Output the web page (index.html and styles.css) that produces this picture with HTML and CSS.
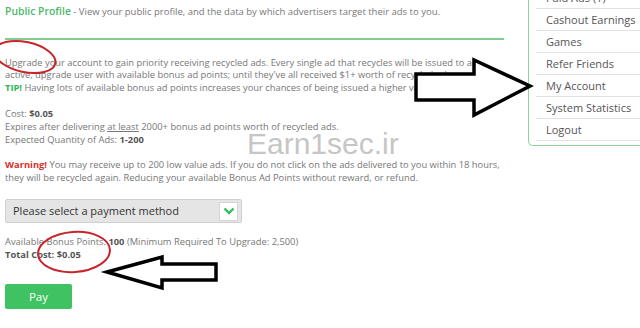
FILE: index.html
```html
<!DOCTYPE html>
<html lang="en">
<head>
    <meta charset="UTF-8">
    <title>Upgrade</title>
    <link rel="stylesheet" href="styles.css">
</head>
<body>
    <div id="page">
        <div id="main">
            <div class="page-title"><span class="title-green">Public Profile</span> - View your public profile, and the data by which advertisers target their ads to you.</div>
            <div class="title-rule"></div>

            <p class="intro">Upgrade your account to gain priority receiving recycled ads. Every single ad that recycles will be issued to an active, upgrade user with available bonus ad points; until they've all received $1+ worth of recycled ads.<br>
            <b class="tip">TIP!</b> Having lots of available bonus ad points increases your chances of being issued a higher value recycled ad.</p>

            <p class="details">Cost: <b>$0.05</b><br>
            Expires after delivering <u>at least</u> 2000+ bonus ad points worth of recycled ads.<br>
            Expected Quantity of Ads: <b>1-200</b></p>

            <p class="warning"><b class="warn">Warning!</b> You may receive up to 200 low value ads. If you do not click on the ads delivered to you within 18 hours, they will be recycled again. Reducing your available Bonus Ad Points without reward, or refund.</p>

            <div class="select-box">
                <span>Please select a payment method</span>
                <span class="select-arrow">
                    <svg width="12" height="8" viewBox="0 0 12 8"><path d="M1.5 1.5 L6 6 L10.5 1.5" fill="none" stroke="#2fbf5a" stroke-width="2.4"/></svg>
                </span>
            </div>

            <p class="totals">Available Bonus Points: <b>100</b> (Minimum Required To Upgrade: 2,500)<br>
            <b>Total Cost: $0.05</b></p>

            <button class="pay-btn">Pay</button>
        </div>

        <ul id="sidebar">
            <li>Paid Ads (1)</li>
            <li>Cashout Earnings</li>
            <li>Games</li>
            <li>Refer Friends</li>
            <li>My Account</li>
            <li>System Statistics</li>
            <li>Logout</li>
        </ul>
    </div>

    <!-- annotations drawn over the screenshot -->
    <div class="watermark">Earn1sec.ir</div>
    <svg class="marks" width="640" height="328" viewBox="0 0 640 328">
        <ellipse cx="25" cy="57" rx="31" ry="15" transform="rotate(12 25 57)" fill="none" stroke="#c9242c" stroke-width="2"/>
        <ellipse cx="74" cy="252" rx="36" ry="20" transform="rotate(-4 74 252)" fill="none" stroke="#c9242c" stroke-width="2"/>
        <path d="M416 74 L474 74 L474 60 L530 86 L474 115 L474 100 L416 100 Z" fill="#fff" stroke="#000" stroke-width="3.5" stroke-linejoin="miter"/>
        <path d="M107 272 L162 257 L162 264 L216 264 L216 280 L162 280 L162 288 Z" fill="#fff" stroke="#000" stroke-width="3.5" stroke-linejoin="miter"/>
    </svg>
</body>
</html>
```

FILE: styles.css
```css
body {
    margin: 0;
    font-family: "Open Sans", Arial, sans-serif;
    color: #777;
    background: #fff;
    overflow: hidden;
    width: 640px;
    height: 328px;
    position: relative;
}
#page {
    display: flex;
    align-items: flex-start;
}
#main {
    flex-shrink: 0;
    width: 499px;
    padding-left: 5px;
    font-size: 9.35px;
    line-height: 12.6px;
}
.page-title {
    padding-top: 5px;
    font-size: 9.5px;
}
.title-green {
    color: #4cb86a;
    font-size: 10.4px;
    font-weight: 600;
}
.title-rule {
    height: 2px;
    background: #7fcb90;
    margin-top: 19px;
}
p {
    margin: 0;
    max-width: 491px;
}
.intro {
    margin-top: 17px;
}
.tip {
    color: #2fb457;
}
.details {
    margin-top: 14px;
}
.details b, .totals b {
    color: #555;
}
.warning {
    margin-top: 13px;
    max-width: 499px;
}
.warn {
    color: #d9302c;
}
.select-box {
    margin-top: 15px;
    width: 237px;
    height: 24px;
    background: #e5e5e5;
    border: 1px solid #cfcfcf;
    border-radius: 2px;
    display: flex;
    align-items: center;
    justify-content: space-between;
    padding: 0 3px 0 7px;
    box-sizing: border-box;
    color: #333;
    font-size: 11px;
}
.select-arrow {
    width: 17px;
    height: 17px;
    background: #fff;
    border: 1px solid #d5d5d5;
    display: flex;
    align-items: center;
    justify-content: center;
}
.totals {
    margin-top: 13px;
}
.pay-btn {
    margin-top: 22px;
    width: 67px;
    height: 25px;
    border: none;
    border-radius: 2px;
    background: #3ec262;
    color: #fff;
    font-family: "Open Sans", Arial, sans-serif;
    font-size: 11.5px;
}
#sidebar {
    flex-shrink: 0;
    list-style: none;
    margin: -13px 0 0 24px;
    padding: 0 0 4px 7px;
    width: 130px;
    border: 1px solid #8fd39f;
    border-right: none;
    border-top: none;
    border-bottom-left-radius: 5px;
    font-size: 11px;
    color: #555;
}
#sidebar li {
    height: 21px;
    line-height: 21px;
    padding-left: 10px;
    border-bottom: 1px solid #e2e2e2;
}
.watermark {
    position: absolute;
    left: 247px;
    top: 127px;
    font-family: "Liberation Sans", Arial, sans-serif;
    font-size: 30px;
    color: #c6c6c6;
}
.marks {
    position: absolute;
    left: 0;
    top: 0;
}
```
